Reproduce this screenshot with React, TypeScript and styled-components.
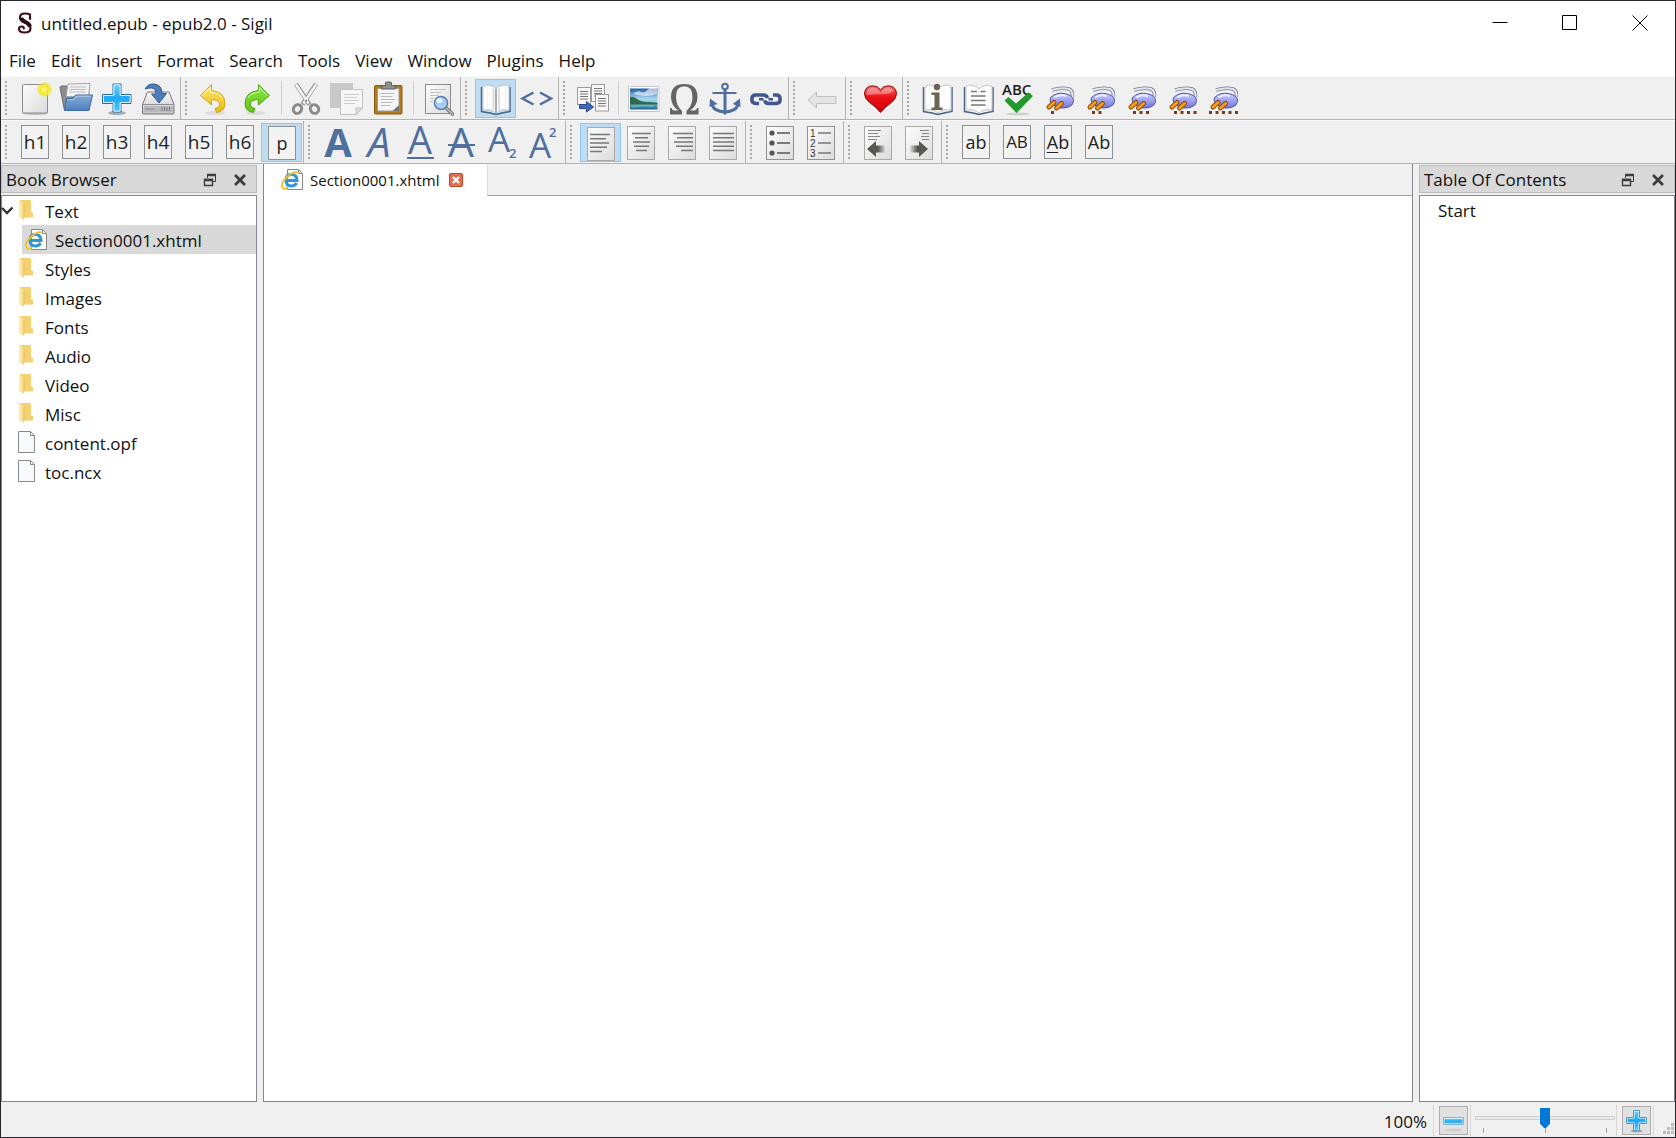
import React, { useState } from "react";
import styled, { createGlobalStyle, css } from "styled-components";

const FONT = '"Open Sans", "Noto Sans", sans-serif';
const INK = "#4f6f9f";

const GlobalStyle = createGlobalStyle`
  *, *::before, *::after { box-sizing: border-box; }
  body { margin: 0; font-family: ${FONT}; color: #111; background: #f0f0f0; }
  button, input { font: inherit; color: inherit; }
  svg { display: block; flex: none; overflow: visible; }
  svg text { font-family: ${FONT}; }
`;

/* ---------- window frame ---------- */

const Window = styled.div`
  min-height: 100vh;
  display: flex;
  flex-direction: column;
  border: 1px solid #26262b;
  background: #f0f0f0;
  font-size: 17px;
  line-height: 24px;
`;

const TitleBar = styled.header`
  display: flex;
  align-items: center;
  gap: 7px;
  height: 44px;
  padding-left: 15px;
  background: #fff;
`;

const WindowTitle = styled.h1`
  flex: 1;
  margin: 0;
  padding-top: 2px;
  font-size: 17px;
  font-weight: 400;
`;

const CaptionButtons = styled.div`
  display: flex;
`;

const CaptionButton = styled.button`
  display: grid;
  place-items: center;
  width: 70px;
  height: 44px;
  padding: 0;
  border: 0;
  background: transparent;
`;

const MenuBar = styled.nav`
  display: flex;
  flex-wrap: wrap;
  min-height: 31px;
  padding-left: 1px;
  background: #fff;
`;

const MenuItem = styled.button`
  height: 31px;
  padding: 1px 8px 0 7px;
  border: 0;
  background: transparent;
  font-size: 17px;
  line-height: 30px;
`;

/* ---------- toolbars ---------- */

const ToolbarRow = styled.div`
  display: flex;
  flex-wrap: wrap;
  min-height: 44px;
  border-top: 1px solid #fafafa;
  border-bottom: 1px solid #b4b4b4;
`;

const Toolbar = styled.div<{ $last?: boolean }>`
  display: flex;
  align-items: center;
  padding-right: 1px;
  border-right: 1px solid ${(p) => (p.$last ? "transparent" : "#b4b4b4")};
`;

const Grip = styled.span`
  width: 2px;
  height: 34px;
  margin: 0 8px 0 4px;
  background: repeating-linear-gradient(#a8a8a8 0 2px, transparent 2px 4px);
`;

const Divider = styled.span`
  width: 1px;
  height: 34px;
  margin: 0 4px;
  background: #cfcfcf;
`;

const ToolButton = styled.button<{ $on?: boolean }>`
  display: grid;
  place-items: center;
  width: 41px;
  height: 39px;
  padding: 0;
  border: 0;
  background: transparent;
  ${(p) =>
    p.$on &&
    css`
      background: #c0dcf3;
      box-shadow: inset 0 0 0 1px #93c7f2;
    `}
`;

const LetterBox = styled.span<{ $size: number; $pressed: boolean }>`
  display: grid;
  place-items: center;
  width: 28px;
  height: 34px;
  margin: ${(p) => (p.$pressed ? "1px 0 0 1px" : "0 1px 1px 0")};
  border: 1px solid #8e9292;
  background: #f3f3f3;
  color: #222;
  font-size: ${(p) => p.$size}px;
  line-height: 30px;
`;

const Lettering = styled.span`
  display: block;
`;

const Underlined = styled.span`
  text-decoration: underline;
  text-decoration-thickness: 1px;
  text-underline-offset: 3px;
`;

/* ---------- panels ---------- */

const Workspace = styled.div`
  flex: 1;
  display: grid;
  grid-template-columns: 256px minmax(0, 1fr) 256px;
  column-gap: 6px;
`;

const Dock = styled.aside`
  display: flex;
  flex-direction: column;
  gap: 2px;
  padding-top: 1px;
`;

const DockHeader = styled.div`
  display: flex;
  align-items: center;
  height: 28px;
  padding: 0 8px 0 4px;
  border: 1px solid #bcbcbc;
  background: #d9d9d9;
`;

const DockTitle = styled.h2`
  flex: 1;
  margin: 0;
  padding-top: 2px;
  font-size: 17px;
  font-weight: 400;
`;

const DockButton = styled.button`
  display: grid;
  place-items: center;
  width: 16px;
  height: 20px;
  margin-left: 14px;
  padding: 2px 0 0;
  border: 0;
  background: transparent;
`;

const Panel = styled.div`
  flex: 1;
  border: 1px solid #828790;
  background: #fff;
`;

const Tree = styled.ul`
  margin: 0;
  padding: 0;
  list-style: none;
`;

const TreeRow = styled.li`
  display: flex;
  align-items: center;
  height: 29px;
`;

const Twisty = styled.button`
  display: grid;
  place-items: center start;
  width: 14px;
  height: 29px;
  padding: 0;
  border: 0;
  background: transparent;
`;

const TreeItem = styled.button<{ $indent: number; $selected?: boolean }>`
  flex: 1;
  display: flex;
  align-items: center;
  gap: 5px;
  height: 29px;
  margin-left: ${(p) => p.$indent}px;
  padding: 0 0 0 ${(p) => (p.$indent > 14 ? 4 : 0)}px;
  border: 0;
  background: ${(p) => (p.$selected ? "#d9d9d9" : "transparent")};
  text-align: left;
`;

const TreeLabel = styled.span`
  padding-top: 2px;
`;

const OutlineItem = styled.li`
  height: 29px;
  padding-left: 18px;
  line-height: 29px;
`;

const Editor = styled.main`
  display: flex;
  flex-direction: column;
  border: 1px solid #828790;
  border-top: 0;
  background: #fff;
`;

const TabStrip = styled.div`
  display: flex;
  height: 32px;
  background: #f0f0f0;
`;

const Tab = styled.div`
  display: flex;
  align-items: center;
  gap: 8px;
  padding: 0 23px 0 18px;
  background: #fff;
`;

const TabLabel = styled.button`
  display: flex;
  align-items: center;
  gap: 4px;
  padding: 0;
  border: 0;
  background: transparent;
  font-size: 15px;
`;

const TabClose = styled.button`
  padding: 0;
  border: 0;
  background: transparent;
`;

const TabFill = styled.span`
  flex: 1;
  border-left: 1px solid #dcdcdc;
  border-bottom: 1px solid #a0a0a4;
`;

const Page = styled.div`
  flex: 1;
`;

/* ---------- status bar ---------- */

const StatusBar = styled.footer`
  display: flex;
  align-items: center;
  justify-content: flex-end;
  height: 35px;
  padding: 2px 1px 0 0;
`;

const ZoomValue = styled.output`
  margin-right: 6px;
  padding-top: 3px;
`;

const StatusDivider = styled.span`
  width: 1px;
  height: 31px;
  background: #d7d7d7;
`;

const ZoomButton = styled.button`
  display: grid;
  place-items: center;
  width: 29px;
  height: 29px;
  margin: 0 2px 0 5px;
  padding: 0;
  border: 1px solid #adadad;
  background: #e1e1e1;
`;

const ZoomTrack = styled.label`
  display: flex;
  flex-direction: column;
  width: 140px;
  margin: 0 1px 0 4px;
`;

const ZoomRange = styled.input`
  appearance: none;
  width: 100%;
  height: 20px;
  margin: 0;
  background: transparent;

  &::-webkit-slider-runnable-track {
    height: 4px;
    border: 1px solid #d0d0d0;
    background: #e7eaea;
  }
  &::-webkit-slider-thumb {
    appearance: none;
    width: 10px;
    height: 20px;
    margin-top: -9px;
    background: #0078d7;
    clip-path: polygon(0 0, 100% 0, 100% 78%, 60% 100%, 40% 100%, 0 78%);
  }
`;

const Ticks = styled.span`
  display: flex;
  justify-content: space-between;
  height: 5px;
  padding: 0 8px;
`;

const Tick = styled.span`
  width: 1px;
  background: #a0a0a0;
`;

const SizeGrip = styled.span`
  align-self: flex-end;
  margin: 0 0 2px 8px;
`;

/* ---------- shared gradients ---------- */

const Definitions = styled.svg`
  position: absolute;
`;

const Gradients = () => (
  <Definitions width="0" height="0" aria-hidden="true">
    <defs>
      <linearGradient id="paper" x1="0" y1="0" x2="1" y2="1">
        <stop offset="0" stopColor="#fdfdfd" />
        <stop offset="1" stopColor="#dcdcdc" />
      </linearGradient>
      <radialGradient id="glow">
        <stop offset="0" stopColor="#fffbd0" />
        <stop offset="0.35" stopColor="#f9ee30" />
        <stop offset="0.75" stopColor="#f3e428" stopOpacity="0.75" />
        <stop offset="1" stopColor="#f3e428" stopOpacity="0" />
      </radialGradient>
      <linearGradient id="folderBlue" x1="0" y1="0" x2="0" y2="1">
        <stop offset="0" stopColor="#86acd8" />
        <stop offset="1" stopColor="#4d7fbd" />
      </linearGradient>
      <linearGradient id="sky" x1="0" y1="0" x2="0" y2="1">
        <stop offset="0" stopColor="#5fd0ff" />
        <stop offset="0.5" stopColor="#1fa8f2" />
        <stop offset="1" stopColor="#48c4ff" />
      </linearGradient>
      <linearGradient id="metal" x1="0" y1="0" x2="0" y2="1">
        <stop offset="0" stopColor="#fafafa" />
        <stop offset="1" stopColor="#c4c4c8" />
      </linearGradient>
      <linearGradient id="gold" x1="0" y1="0" x2="0" y2="1">
        <stop offset="0" stopColor="#ffe777" />
        <stop offset="1" stopColor="#e6b90e" />
      </linearGradient>
      <linearGradient id="leaf" x1="0" y1="0" x2="0" y2="1">
        <stop offset="0" stopColor="#8be83e" />
        <stop offset="1" stopColor="#62c11a" />
      </linearGradient>
      <linearGradient id="ruby" x1="0" y1="0" x2="0" y2="1">
        <stop offset="0" stopColor="#f36a6a" />
        <stop offset="0.45" stopColor="#ea0f14" />
        <stop offset="1" stopColor="#d00008" />
      </linearGradient>
      <linearGradient id="lilac" x1="0" y1="0" x2="0" y2="1">
        <stop offset="0" stopColor="#c9ccff" />
        <stop offset="1" stopColor="#7377dc" />
      </linearGradient>
      <linearGradient id="scene" x1="0" y1="0" x2="0" y2="1">
        <stop offset="0" stopColor="#1f5da8" />
        <stop offset="0.5" stopColor="#a9d9ee" />
        <stop offset="0.7" stopColor="#7cc0cc" />
        <stop offset="1" stopColor="#1a5f96" />
      </linearGradient>
      <linearGradient id="manila" x1="0" y1="0" x2="1" y2="0">
        <stop offset="0" stopColor="#ffeeb8" />
        <stop offset="1" stopColor="#f6d67e" />
      </linearGradient>
      <linearGradient id="fadeLeft" x1="0" y1="0" x2="1" y2="0">
        <stop offset="0.6" stopColor="#555753" />
        <stop offset="1" stopColor="#555753" stopOpacity="0.1" />
      </linearGradient>
      <linearGradient id="fadeRight" x1="0" y1="0" x2="1" y2="0">
        <stop offset="0" stopColor="#555753" stopOpacity="0.1" />
        <stop offset="0.4" stopColor="#555753" />
      </linearGradient>
    </defs>
  </Definitions>
);

/* ---------- icons ---------- */

const Icon = ({ children }: { children: React.ReactNode }) => (
  <svg width="41" height="39" viewBox="0 0 41 39" fill="none" aria-hidden="true">
    {children}
  </svg>
);

const NewIcon = () => (
  <Icon>
    <ellipse cx="20" cy="34.5" rx="13" ry="1.5" fill="#bbb" />
    <rect x="7.5" y="5.5" width="25" height="28.5" rx="1" fill="url(#paper)" stroke="#8b8b8b" />
    <circle cx="29.5" cy="10.5" r="8" fill="url(#glow)" />
  </Icon>
);

const OpenIcon = () => (
  <Icon>
    <path d="M4 8.500l1-1.500h6l2 2.500h20l-1 22H8.500z" fill="#8c8c8c" stroke="#6c6c6c" />
    <path d="M12 5l22-.5-1.500 13H10z" fill="#f4f4f4" stroke="#a5a5a5" />
    <path d="M14 8h16M13.700 10.500h16M13.400 13h16" stroke="#b9b9b9" />
    <path d="M8.500 31.500l2-12h6.500l2.500-3.500h17l-3.500 15.500z" fill="url(#folderBlue)" stroke="#3d6aa5" />
    <path d="M11.500 20.700h6.300l2.500-3.500h14.500" stroke="#b4cdea" />
  </Icon>
);

const AddIcon = () => (
  <Icon>
    <ellipse cx="20" cy="34" rx="9" ry="2.200" fill="#8f9497" opacity="0.7" />
    <path d="M16 5h8v10.500h10v9H24V33h-8v-8.500H5.500v-9H16z" fill="#fff" stroke="#2c6c9c" />
    <path d="M17 6h6v10.500h10v7H23V32h-6v-8.500H6.500v-7H17z" fill="url(#sky)" stroke="#d9f2ff" strokeWidth="0.800" />
  </Icon>
);

const SaveIcon = () => (
  <Icon>
    <path d="M9.500 13h21.500l5 12.500v8.500q0 1-1 1H5.500q-1 0-1-1v-8.500z" fill="url(#metal)" stroke="#77777b" />
    <path d="M5 25.500h30.500" stroke="#8f8f93" />
    <path d="M6 27h29v6H6z" fill="#b9b9bd" />
    <path d="M24 28v4M26.500 28v4M29 28v4M31.500 28v4" stroke="#7b7b80" />
    <path d="M7.500 30h9" stroke="#8b8b90" />
    <path d="M7 10Q10 4.500 16 5q8 .8 8 9.500h4.500L21 24l-7.500-9h4.500q.2-5.500-4.500-6-3-.3-6.500 1z" fill="#4f7db8" stroke="#2f578f" />
  </Icon>
);

const UndoIcon = () => (
  <Icon>
    <ellipse cx="20" cy="34" rx="10" ry="2" fill="#ddd" />
    <path d="M5.500 16.500L16.500 5.500v6Q30 13 30 24.500q0 8-8.500 9l-1.500-4q4.500-.8 4.500-4.500 0-4-8-4.500v5.500z" fill="url(#gold)" stroke="#d6aa1c" />
    <path d="M7.500 16.500l8-8v4.700q9 .8 12 6" stroke="#fff5b8" />
  </Icon>
);

const RedoIcon = () => (
  <Icon>
    <ellipse cx="20" cy="34" rx="10" ry="2" fill="#ddd" />
    <path d="M33.500 16.500L22.500 5.500v6Q9 13 9 24.500q0 8 8.500 9l1.500-4q-4.500-.8-4.500-4.500 0-4 8-4.500v5.500z" fill="url(#leaf)" stroke="#52a51c" />
    <path d="M31.500 16.500l-8-8v4.700q-9 .8-12 6" stroke="#d0f7a8" />
  </Icon>
);

const CutIcon = () => (
  <Icon>
    <path d="M10 5L23.500 25.500M30 5L16.500 25.500" stroke="#9a9a9a" strokeWidth="4.500" />
    <path d="M10 5.500L22.500 24.500M30 5.500L17.500 24.500" stroke="#f2f2f2" strokeWidth="2.500" />
    <ellipse cx="11.500" cy="30" rx="4" ry="4.500" transform="rotate(35 11.5 30)" stroke="#8b8b8b" strokeWidth="3" />
    <ellipse cx="28.500" cy="30" rx="4" ry="4.500" transform="rotate(-35 28.5 30)" stroke="#8b8b8b" strokeWidth="3" />
    <circle cx="20" cy="22" r="1.200" fill="#888" />
  </Icon>
);

const CopyIcon = () => (
  <Icon>
    <rect x="3" y="4" width="23" height="25" fill="#c9c9c9" />
    <path d="M13.500 10.500h22V29l-6.500 6.500H13.500z" fill="#f6f6f6" stroke="#c2c2c2" />
    <path d="M17 15.500h15M17 18.500h13M17 21.500h15M17 24.500h11" stroke="#cdcdcd" />
    <path d="M35.500 29h-6.500v6.500z" fill="#dedede" stroke="#c2c2c2" />
  </Icon>
);

const PasteIcon = () => (
  <Icon>
    <rect x="6.500" y="6.500" width="27.500" height="28.500" rx="1" fill="#b17a1f" stroke="#8a5a10" />
    <path d="M9.500 9.500h21.500V32H9.500z" fill="#f5f5f5" stroke="#9c9c9c" />
    <path d="M12.500 14.500h14M12.500 17.500h12M12.500 20.500h15M12.500 23.500h12M12.500 26.500h10" stroke="#bcbcbc" />
    <path d="M31 26v6h-6.500z" fill="#74736c" />
    <path d="M13.500 8.500q0-2 2-2h2V4q0-1 1-1h4q1 0 1 1v2.500h2q2 0 2 2v1.500h-14z" fill="#8e908a" stroke="#5f615b" />
  </Icon>
);

const FindIcon = () => (
  <Icon>
    <rect x="7.500" y="5.500" width="25" height="29" fill="url(#paper)" stroke="#8c8c8c" />
    <path d="M12 10.500h16M12 13.500h11M12 16.500h9M12 19.500h4M12 22.500h3" stroke="#c4c4c4" />
    <path d="M28 29l6.500 6" stroke="#6e6e6e" strokeWidth="3.500" strokeLinecap="round" />
    <path d="M28 29l6.500 6" stroke="#c6c6c6" strokeWidth="1.500" strokeLinecap="round" />
    <circle cx="23" cy="24" r="6.500" fill="#a9cdf3" stroke="#5d7fac" strokeWidth="1.500" />
    <ellipse cx="21.500" cy="21.500" rx="3" ry="2.500" fill="#e4f1fd" />
  </Icon>
);

const BookBase = () => (
  <>
    <path d="M6.500 8v24.500l8.500 1.500 6 1.500 6-1.500 8-1.500V8" stroke="#4a6488" strokeWidth="1.500" />
    <path d="M8 31V7.500q3-2.500 7-1 4.500 1 6 3.500 1.500-2.500 6-3.500 4-1.500 7 1V31q-8-1.500-13 3-5-4.500-13-3z" fill="#fcfcfc" stroke="#c4c7cb" />
  </>
);

const BookIcon = () => (
  <Icon>
    <BookBase />
    <path d="M21 10v23.500" stroke="#8e959e" strokeWidth="1.500" />
    <path d="M18.500 9v22M24 9v22" stroke="#dedede" strokeWidth="2" />
    <path d="M12 7v22M30.500 7v22" stroke="#efefef" />
  </Icon>
);

const CodeIcon = () => (
  <Icon>
    <path d="M17.500 13.500L6.500 19.500l11 6M24 13.500l11 6-11 6" stroke={INK} strokeWidth="2.500" />
  </Icon>
);

const Sheet = ({ x, y, h }: { x: number; y: number; h: number }) => (
  <>
    <rect x={x} y={y} width="13" height={h} fill="#f7f7f7" stroke="#9c9c9c" />
    <path
      d={`M${x + 2.5} ${y + 4}h8M${x + 2.5} ${y + 6.5}h8M${x + 2.5} ${y + 9}h8M${x + 2.5} ${y + 11.5}h8`}
      stroke="#777"
    />
  </>
);

const SplitIcon = () => (
  <Icon>
    <Sheet x={4.5} y={8.5} h={17} />
    <Sheet x={18.5} y={5.5} h={17} />
    <Sheet x={22.5} y={15.5} h={16.5} />
    <path d="M6.500 25.500h7v-3l7 5.500-7 5v-3.500h-7z" fill="#4068c0" stroke="#2a4a92" />
  </Icon>
);

const ImageIcon = () => (
  <Icon>
    <rect x="5.500" y="7.500" width="30.500" height="25" fill="#fff" stroke="#c8c8c8" />
    <rect x="7" y="9.500" width="27.500" height="21" fill="url(#scene)" />
    <path d="M10 15q5-4 8-2t7-2.500 9-.5v5q-6 2-10 2t-14-2z" fill="#fff" opacity="0.6" />
    <path d="M7 18q3-1 7 2t10 3q6 0 10.500 1v1.500H7z" fill="#2c6a4b" />
    <path d="M9 28q8-2 22-1" stroke="#7fc0cf" />
  </Icon>
);

const OmegaIcon = () => (
  <Icon>
    <path
      d="M6 35.500v-6.500h1.500q.5 2.500 2.500 2.500h4.500Q7 26.500 7 18 7 5 20.200 5T33.500 18q0 8.500-7.500 13.500h4.500q2 0 2.500-2.500h1.500v6.500H22.500V32Q28.500 26.500 28.500 18 28.500 7.300 20.200 7.300T12 18q0 8.500 6 14v3.500z"
      fill="#646464"
    />
  </Icon>
);

const AnchorIcon = () => (
  <Icon>
    <g stroke={INK}>
      <circle cx="20" cy="7.500" r="2.800" strokeWidth="2" />
      <path d="M7.500 14h24" strokeWidth="2" />
      <path d="M20 10.500V33" strokeWidth="3" />
      <path d="M7 25.500Q9 32.500 20 33q11-.5 13-7.500" strokeWidth="3" />
    </g>
    <path d="M4.500 28L5 19.500l7.500 5.500zM35.500 28l-.5-8.500-7.500 5.500zM16.500 32.500h7L20 36z" fill={INK} />
  </Icon>
);

const LinkIcon = () => (
  <Icon>
    <g stroke="#41568f" strokeWidth="3.500">
      <path d="M13 24.500h-3q-4.200 0-4.200-4.200t4.200-4.200h7q4.200 0 4.200 3.200" />
      <path d="M27 16.100h3q4.200 0 4.200 4.200t-4.200 4.200h-7q-4.200 0-4.200-3.200" />
    </g>
    <path d="M13 20.300h4.500M22.500 20.300H27" stroke="#41568f" strokeWidth="2.500" />
  </Icon>
);

const BackIcon = () => (
  <Icon>
    <path d="M5 21l8.500-8v4.500H33v7H13.500V29z" fill="#e4e4e4" stroke="#c0c0c0" />
  </Icon>
);

const HeartIcon = () => (
  <Icon>
    <path d="M20.500 33.500Q16 28 9.500 23.500 4 19 4.500 14 5.500 7 12.500 6.800q5.500 0 8 4 2.500-4 8-4 7 .2 8 7.200.5 5-5 9.500-6.500 4.500-11 10z" fill="url(#ruby)" stroke="#8f1013" />
    <path d="M6.500 16q-.5-7 6-7.500 5 0 8 5 3-5 8-5 3.500.5 5 3-3 3.500-10 3.500-9 0-17 1z" fill="#fff" opacity="0.35" />
  </Icon>
);

const InfoIcon = () => (
  <Icon>
    <BookBase />
    <g fill="#6b6455">
      <circle cx="20" cy="8" r="3.200" />
      <path d="M14.500 13.500h8v15h3V31h-11v-2.500h3v-12.500h-3z" />
    </g>
  </Icon>
);

const ContentsIcon = () => (
  <Icon>
    <BookBase />
    <path d="M13 12.500h6M22.500 12.500h5M13 17h14.500M13 21.500h14.500M13 26h14.500" stroke="#777" strokeWidth="1.500" />
  </Icon>
);

const SpellIcon = () => (
  <Icon>
    <ellipse cx="19" cy="35" rx="12" ry="1.500" fill="#cfcfcf" />
    <text x="3" y="16" fontSize="15" fontWeight="600" fill="#222">
      ABC
    </text>
    <path d="M5.500 21.500l4-3.500 7.500 6.500L29.500 13.500l4.500 3.500L17.500 34z" fill="#229a2b" />
  </Icon>
);

const PlugIcon = ({ dots }: { dots: number }) => {
  const start = dots === 5 ? 5 : 11;
  return (
    <Icon>
      <path d="M12 11q10-3 17-1 4 1.500 3.500 8" stroke="#777a8c" strokeWidth="3.500" />
      <path d="M12 11q10-3 17-1 4 1.500 3.500 8" stroke="#e4e5f4" strokeWidth="2" />
      <path d="M10.500 18.500q6-5.500 13.500-4 10 1.500 9.500 8-.5 4-5 5.500-8 2.500-13.500-1-6.500-3.500-4.500-8.500z" fill="url(#lilac)" stroke="#5053a6" />
      <path d="M14 18.500q6-3.500 12-1.500" stroke="#eceeff" strokeWidth="2" />
      <path d="M14 23.500l-5 4.500M21.500 24.500l-5 4.500" stroke="#8c4c06" strokeWidth="5" strokeLinecap="round" />
      <path d="M14 23.500l-5 4.500M21.500 24.500l-5 4.500" stroke="#f59c1d" strokeWidth="3" strokeLinecap="round" />
      {Array.from({ length: dots }, (_, i) => (
        <rect key={i} x={start + i * 6.5} y="32" width="3" height="3" fill="#7a3c1a" />
      ))}
    </Icon>
  );
};

type Glyph = { weight?: number; italic?: boolean; size?: number; x?: number; y?: number };
const BigA = ({ weight = 500, italic, size = 41, x = 20, y = 34 }: Glyph) => (
  <text x={x} y={y} textAnchor="middle" fontSize={size} fontWeight={weight} fontStyle={italic ? "italic" : "normal"} fill={INK}>
    A
  </text>
);

const UnderlineIcon = () => (
  <Icon>
    <BigA size={38} y={31} />
    <path d="M7 35h27" stroke={INK} strokeWidth="2" />
  </Icon>
);

const StrikeIcon = () => (
  <Icon>
    <BigA />
    <path d="M7 22h27" stroke={INK} strokeWidth="2" />
  </Icon>
);

const ScriptIcon = ({ raised }: { raised?: boolean }) => (
  <Icon>
    <BigA size={35} x={17} y={raised ? 35 : 29} />
    <text x={raised ? 26 : 27} y={raised ? 14 : 35} fontSize="13" fontWeight="600" fill={INK}>
      2
    </text>
  </Icon>
);

const PageBack = ({ dim, shift = 0 }: { dim?: boolean; shift?: number }) => (
  <rect x={6.5 + shift} y={3.5 + shift} width="27" height="33" fill="url(#paper)" stroke={dim ? "#a9a9a9" : "#8e9292"} />
);

const ALIGN: Record<string, [number, number][]> = {
  left: [[10, 30], [10, 26], [10, 29], [10, 27], [10, 22]],
  center: [[11, 30], [14, 27], [12, 29], [13, 28], [15, 26]],
  right: [[11, 31], [15, 31], [12, 31], [14, 31], [19, 31]],
  justify: [[10, 31], [10, 31], [10, 31], [10, 31], [10, 31]],
};

const AlignIcon = ({ kind, pressed }: { kind: string; pressed?: boolean }) => (
  <Icon>
    <PageBack dim shift={pressed ? 1 : 0} />
    {ALIGN[kind].map(([a, b], i) => (
      <path key={i} d={`M${a} ${(pressed ? 11.5 : 10.5) + i * 4.25}H${b}`} stroke="#777" strokeWidth="1.500" />
    ))}
  </Icon>
);

const BulletsIcon = () => (
  <Icon>
    <PageBack />
    {[10, 20, 30].map((y) => (
      <g key={y}>
        <circle cx="12" cy={y} r="2.600" fill="#555" />
        <path d={`M17 ${y}h13`} stroke="#555" strokeWidth="1.500" />
      </g>
    ))}
  </Icon>
);

const SmallDigit = styled.text`
  && { font-family: "Liberation Sans", sans-serif; }
`;

const NumbersIcon = () => (
  <Icon>
    <PageBack />
    {[10, 20, 30].map((y, i) => (
      <g key={y}>
        <SmallDigit x="9" y={y + 4} fontSize="10" fill="#333">
          {i + 1}
        </SmallDigit>
        <path d={`M17 ${y}h13`} stroke="#777" strokeWidth="1.500" />
      </g>
    ))}
  </Icon>
);

const OutdentIcon = () => (
  <Icon>
    <PageBack dim />
    <path d="M10 7.500h13M10 10.500h10M10 13.500h12M10 16.500h9" stroke="#888" />
    <path d="M9 26l9-8v4.500h9v7h-9V34z" fill="url(#fadeLeft)" />
  </Icon>
);

const IndentIcon = () => (
  <Icon>
    <PageBack dim />
    <path d="M21 7.500h9M23 10.500h7M22 13.500h8M23 16.500h7" stroke="#888" />
    <path d="M29 26l-9-8v4.500h-9v7h9V34z" fill="url(#fadeRight)" />
  </Icon>
);

const FolderIcon = () => (
  <svg width="24" height="24" viewBox="0 0 24 24" aria-hidden="true">
    <path d="M3.500 1H14q1 0 1 1v11l2 1v4.500H8z" fill="#f4d173" />
    <path d="M3 1l5 3.500V21l-5-2.500z" fill="url(#manila)" />
    <path d="M8 5v13.500" stroke="#e9bf55" />
  </svg>
);

const FileIcon = () => (
  <svg width="24" height="24" viewBox="0 0 24 24" fill="none" aria-hidden="true">
    <path d="M2.500 .5h12l4 4v17h-16z" fill="#f8f9fb" stroke="#8a8a8a" />
    <path d="M14.500 .5v4h4" stroke="#8a8a8a" />
  </svg>
);

const HtmlIcon = () => (
  <svg width="24" height="24" viewBox="0 0 24 24" fill="none" aria-hidden="true">
    <path d="M5.500 1.500h11l4 4v16h-15z" fill="#fdfdfd" stroke="#8a8a8a" />
    <path d="M16.500 1.500v4h4" stroke="#8a8a8a" />
    <path d="M14.500 15q-1.500 3-5 3-5.500 0-5.500-5.800t5.500-5.800q5.500 0 5.500 6H5" stroke="#2f97d6" strokeWidth="3" />
    <path d="M1 20.500Q-2.500 16 5 9 12 2.500 16 4.500M1 20.500q1.500 1 5-1.300" stroke="#efc02c" strokeWidth="1.800" />
  </svg>
);

const SigilLogo = () => (
  <svg width="18" height="24" viewBox="0 0 18 24" fill="none" aria-hidden="true">
    <path d="M14 8V3.500Q12 2.500 9 2.500 4 2.500 4 6.500q0 3.500 5 5.200 5.500 1.800 5.500 5.500 0 4.300-6 4.300Q3 21.500 3 18q0-2.500 2.800-2.500Q8 15.500 7.800 17.500" stroke="#3a1418" strokeWidth="2.200" strokeLinecap="round" />
    <path d="M5 7q1 2.500 4.500 4t4.500 4.500" stroke="#2a0d12" strokeWidth="4" />
  </svg>
);

const FloatIcon = () => (
  <svg width="14" height="14" viewBox="0 0 14 14" fill="none" stroke="#3c3c3c" aria-hidden="true">
    <path d="M4.500 5V1.500h8v7H10" />
    <path d="M4 2h9M1 7h9" strokeWidth="2.400" />
    <path d="M1.500 6.500h8v6h-8z" strokeWidth="1.400" />
  </svg>
);

const CloseIcon = () => (
  <svg width="14" height="14" viewBox="0 0 14 14" aria-hidden="true">
    <path d="M2 2l10 10M12 2L2 12" stroke="#3c3c3c" strokeWidth="2.800" />
  </svg>
);

const GripDots = () => (
  <svg width="12" height="12" viewBox="0 0 12 12" fill="#bdbdbd" aria-hidden="true">
    <path d="M9 0h3v3H9zM9 4h3v3H9zM9 8h3v3H9zM5 4h3v3H5zM5 8h3v3H5zM1 8h3v3H1z" />
  </svg>
);

/* ---------- toolbar data ---------- */

type Tool = { label: string; icon: React.ReactNode; on?: boolean } | "divider";

const box = (label: string, text: React.ReactNode, size = 18, on = false): Tool => ({
  label,
  icon: (
    <LetterBox $size={size} $pressed={on}>
      <Lettering>{text}</Lettering>
    </LetterBox>
  ),
  on,
});

const TOP_BARS: Tool[][] = [
  [
    { label: "New", icon: <NewIcon /> },
    { label: "Open", icon: <OpenIcon /> },
    { label: "Add Existing Files", icon: <AddIcon /> },
    { label: "Save", icon: <SaveIcon /> },
  ],
  [
    { label: "Undo", icon: <UndoIcon /> },
    { label: "Redo", icon: <RedoIcon /> },
    "divider",
    { label: "Cut", icon: <CutIcon /> },
    { label: "Copy", icon: <CopyIcon /> },
    { label: "Paste", icon: <PasteIcon /> },
    "divider",
    { label: "Find & Replace", icon: <FindIcon /> },
  ],
  [
    { label: "Book View", icon: <BookIcon />, on: true },
    { label: "Code View", icon: <CodeIcon /> },
  ],
  [
    { label: "Split At Cursor", icon: <SplitIcon /> },
    "divider",
    { label: "Insert File", icon: <ImageIcon /> },
    { label: "Insert Special Character", icon: <OmegaIcon /> },
    { label: "Insert ID", icon: <AnchorIcon /> },
    { label: "Insert Link", icon: <LinkIcon /> },
  ],
  [{ label: "Back", icon: <BackIcon /> }],
  [{ label: "Donate", icon: <HeartIcon /> }],
  [
    { label: "Metadata Editor", icon: <InfoIcon /> },
    { label: "Generate Table Of Contents", icon: <ContentsIcon /> },
    { label: "Spellcheck", icon: <SpellIcon /> },
    ...[1, 2, 3, 4, 5].map((n) => ({ label: `Plugin ${n}`, icon: <PlugIcon dots={n} /> })),
  ],
];

const FORMAT_BARS: Tool[][] = [
  [
    ...[1, 2, 3, 4, 5, 6].map((n) => box(`Heading ${n}`, `h${n}`, 19)),
    box("Paragraph", "p", 18, true),
  ],
  [
    { label: "Bold", icon: <Icon><BigA weight={700} size={40} /></Icon> },
    { label: "Italic", icon: <Icon><BigA italic /></Icon> },
    { label: "Underline", icon: <UnderlineIcon /> },
    { label: "Strikethrough", icon: <StrikeIcon /> },
    { label: "Subscript", icon: <ScriptIcon /> },
    { label: "Superscript", icon: <ScriptIcon raised /> },
  ],
  [
    { label: "Align Left", icon: <AlignIcon kind="left" pressed />, on: true },
    { label: "Center", icon: <AlignIcon kind="center" /> },
    { label: "Align Right", icon: <AlignIcon kind="right" /> },
    { label: "Justify", icon: <AlignIcon kind="justify" /> },
  ],
  [
    { label: "Bullet List", icon: <BulletsIcon /> },
    { label: "Numbered List", icon: <NumbersIcon /> },
  ],
  [
    { label: "Decrease Indent", icon: <OutdentIcon /> },
    { label: "Increase Indent", icon: <IndentIcon /> },
  ],
  [
    box("Lowercase", "ab"),
    box("Uppercase", "AB", 17),
    box("Titlecase", <><Underlined>A</Underlined>b</>),
    box("Capitalize", "Ab"),
  ],
];

const Bars = ({ bars }: { bars: Tool[][] }) => (
  <ToolbarRow>
    {bars.map((tools, i) => (
      <Toolbar key={i} role="toolbar" $last={i === bars.length - 1}>
        <Grip />
        {tools.map((tool, j) =>
          tool === "divider" ? (
            <Divider key={j} />
          ) : (
            <ToolButton key={j} type="button" aria-label={tool.label} aria-pressed={tool.on} $on={tool.on}>
              {tool.icon}
            </ToolButton>
          )
        )}
      </Toolbar>
    ))}
  </ToolbarRow>
);

const PanelHeader = ({ title }: { title: string }) => (
  <DockHeader>
    <DockTitle>{title}</DockTitle>
    <DockButton type="button" aria-label={`Float ${title}`}><FloatIcon /></DockButton>
    <DockButton type="button" aria-label={`Close ${title}`}><CloseIcon /></DockButton>
  </DockHeader>
);

const MENUS = ["File", "Edit", "Insert", "Format", "Search", "Tools", "View", "Window", "Plugins", "Help"];
const FOLDERS = ["Styles", "Images", "Fonts", "Audio", "Video", "Misc"];
const FILES = ["content.opf", "toc.ncx"];

export default function App() {
  const [open, setOpen] = useState(true);
  const [zoom, setZoom] = useState(100);
  const step = (by: number) => setZoom((z) => Math.max(0, Math.min(200, z + by)));

  return (
    <Window>
      <GlobalStyle />
      <Gradients />
      <TitleBar>
        <SigilLogo />
        <WindowTitle>untitled.epub - epub2.0 - Sigil</WindowTitle>
        <CaptionButtons>
          <CaptionButton type="button" aria-label="Minimize">
            <svg width="16" height="16"><path d="M.5 7.500h15" stroke="#000" /></svg>
          </CaptionButton>
          <CaptionButton type="button" aria-label="Maximize">
            <svg width="16" height="16"><path d="M.5 .5h14v14H.5z" fill="none" stroke="#000" /></svg>
          </CaptionButton>
          <CaptionButton type="button" aria-label="Close">
            <svg width="16" height="16"><path d="M.5 .5l15 15M15.500 .5l-15 15" stroke="#000" /></svg>
          </CaptionButton>
        </CaptionButtons>
      </TitleBar>
      <MenuBar>
        {MENUS.map((name) => (
          <MenuItem key={name} type="button">{name}</MenuItem>
        ))}
      </MenuBar>
      <Bars bars={TOP_BARS} />
      <Bars bars={FORMAT_BARS} />

      <Workspace>
        <Dock>
          <PanelHeader title="Book Browser" />
          <Panel>
            <Tree>
              <TreeRow>
                <Twisty type="button" aria-label="Toggle Text" aria-expanded={open} onClick={() => setOpen(!open)}>
                  <svg width="12" height="12" viewBox="0 0 12 12" fill="none">
                    <path d="M0 3l5 5 5.500-5.500" stroke="#333" strokeWidth="2.400" />
                  </svg>
                </Twisty>
                <TreeItem type="button" $indent={0}><FolderIcon /><TreeLabel>Text</TreeLabel></TreeItem>
              </TreeRow>
              {open && (
                <TreeRow>
                  <TreeItem type="button" $indent={20} $selected><HtmlIcon /><TreeLabel>Section0001.xhtml</TreeLabel></TreeItem>
                </TreeRow>
              )}
              {FOLDERS.map((name) => (
                <TreeRow key={name}>
                  <TreeItem type="button" $indent={14}><FolderIcon /><TreeLabel>{name}</TreeLabel></TreeItem>
                </TreeRow>
              ))}
              {FILES.map((name) => (
                <TreeRow key={name}>
                  <TreeItem type="button" $indent={14}><FileIcon /><TreeLabel>{name}</TreeLabel></TreeItem>
                </TreeRow>
              ))}
            </Tree>
          </Panel>
        </Dock>

        <Editor>
          <TabStrip>
            <Tab>
              <TabLabel type="button"><HtmlIcon />Section0001.xhtml</TabLabel>
              <TabClose type="button" aria-label="Close tab">
                <svg width="16" height="16" viewBox="0 0 16 16">
                  <rect x="1.500" y="1.500" width="13" height="13" rx="1.500" fill="#e0704f" stroke="#c2472a" />
                  <path d="M5 5l6 6M11 5l-6 6" stroke="#fff" strokeWidth="2.200" />
                </svg>
              </TabClose>
            </Tab>
            <TabFill />
          </TabStrip>
          <Page />
        </Editor>

        <Dock>
          <PanelHeader title="Table Of Contents" />
          <Panel>
            <Tree>
              <OutlineItem>Start</OutlineItem>
            </Tree>
          </Panel>
        </Dock>
      </Workspace>

      <StatusBar>
        <ZoomValue htmlFor="zoom">{zoom}%</ZoomValue>
        <StatusDivider />
        <ZoomButton type="button" aria-label="Zoom out" onClick={() => step(-10)}>
          <svg width="25" height="25" viewBox="0 0 25 25" fill="none">
            <ellipse cx="12.500" cy="22" rx="9" ry="1.500" fill="#cfcfcf" />
            <path d="M2.500 9.500h20v7h-20z" fill="#d9f0ff" stroke="#86b4d0" />
            <path d="M3.500 11h18v4.500h-18z" fill="url(#sky)" />
          </svg>
        </ZoomButton>
        <StatusDivider />
        <ZoomTrack>
          <ZoomRange id="zoom" type="range" min="0" max="200" value={zoom} aria-label="Zoom" onChange={(e) => setZoom(Number(e.target.value))} />
          <Ticks><Tick /><Tick /><Tick /></Ticks>
        </ZoomTrack>
        <StatusDivider />
        <ZoomButton type="button" aria-label="Zoom in" onClick={() => step(10)}>
          <svg width="25" height="25" viewBox="0 0 25 25" fill="none">
            <ellipse cx="12.500" cy="23" rx="6" ry="1.500" fill="#a5a5a5" />
            <path d="M9.500 2.500h6v7h7v6h-7v7h-6v-7h-7v-6h7z" fill="#fff" stroke="#5d94b8" />
            <path d="M10.500 3.500h4v7h7v4h-7v7h-4v-7h-7v-4h7z" fill="url(#sky)" />
          </svg>
        </ZoomButton>
        <StatusDivider />
        <SizeGrip><GripDots /></SizeGrip>
      </StatusBar>
    </Window>
  );
}
